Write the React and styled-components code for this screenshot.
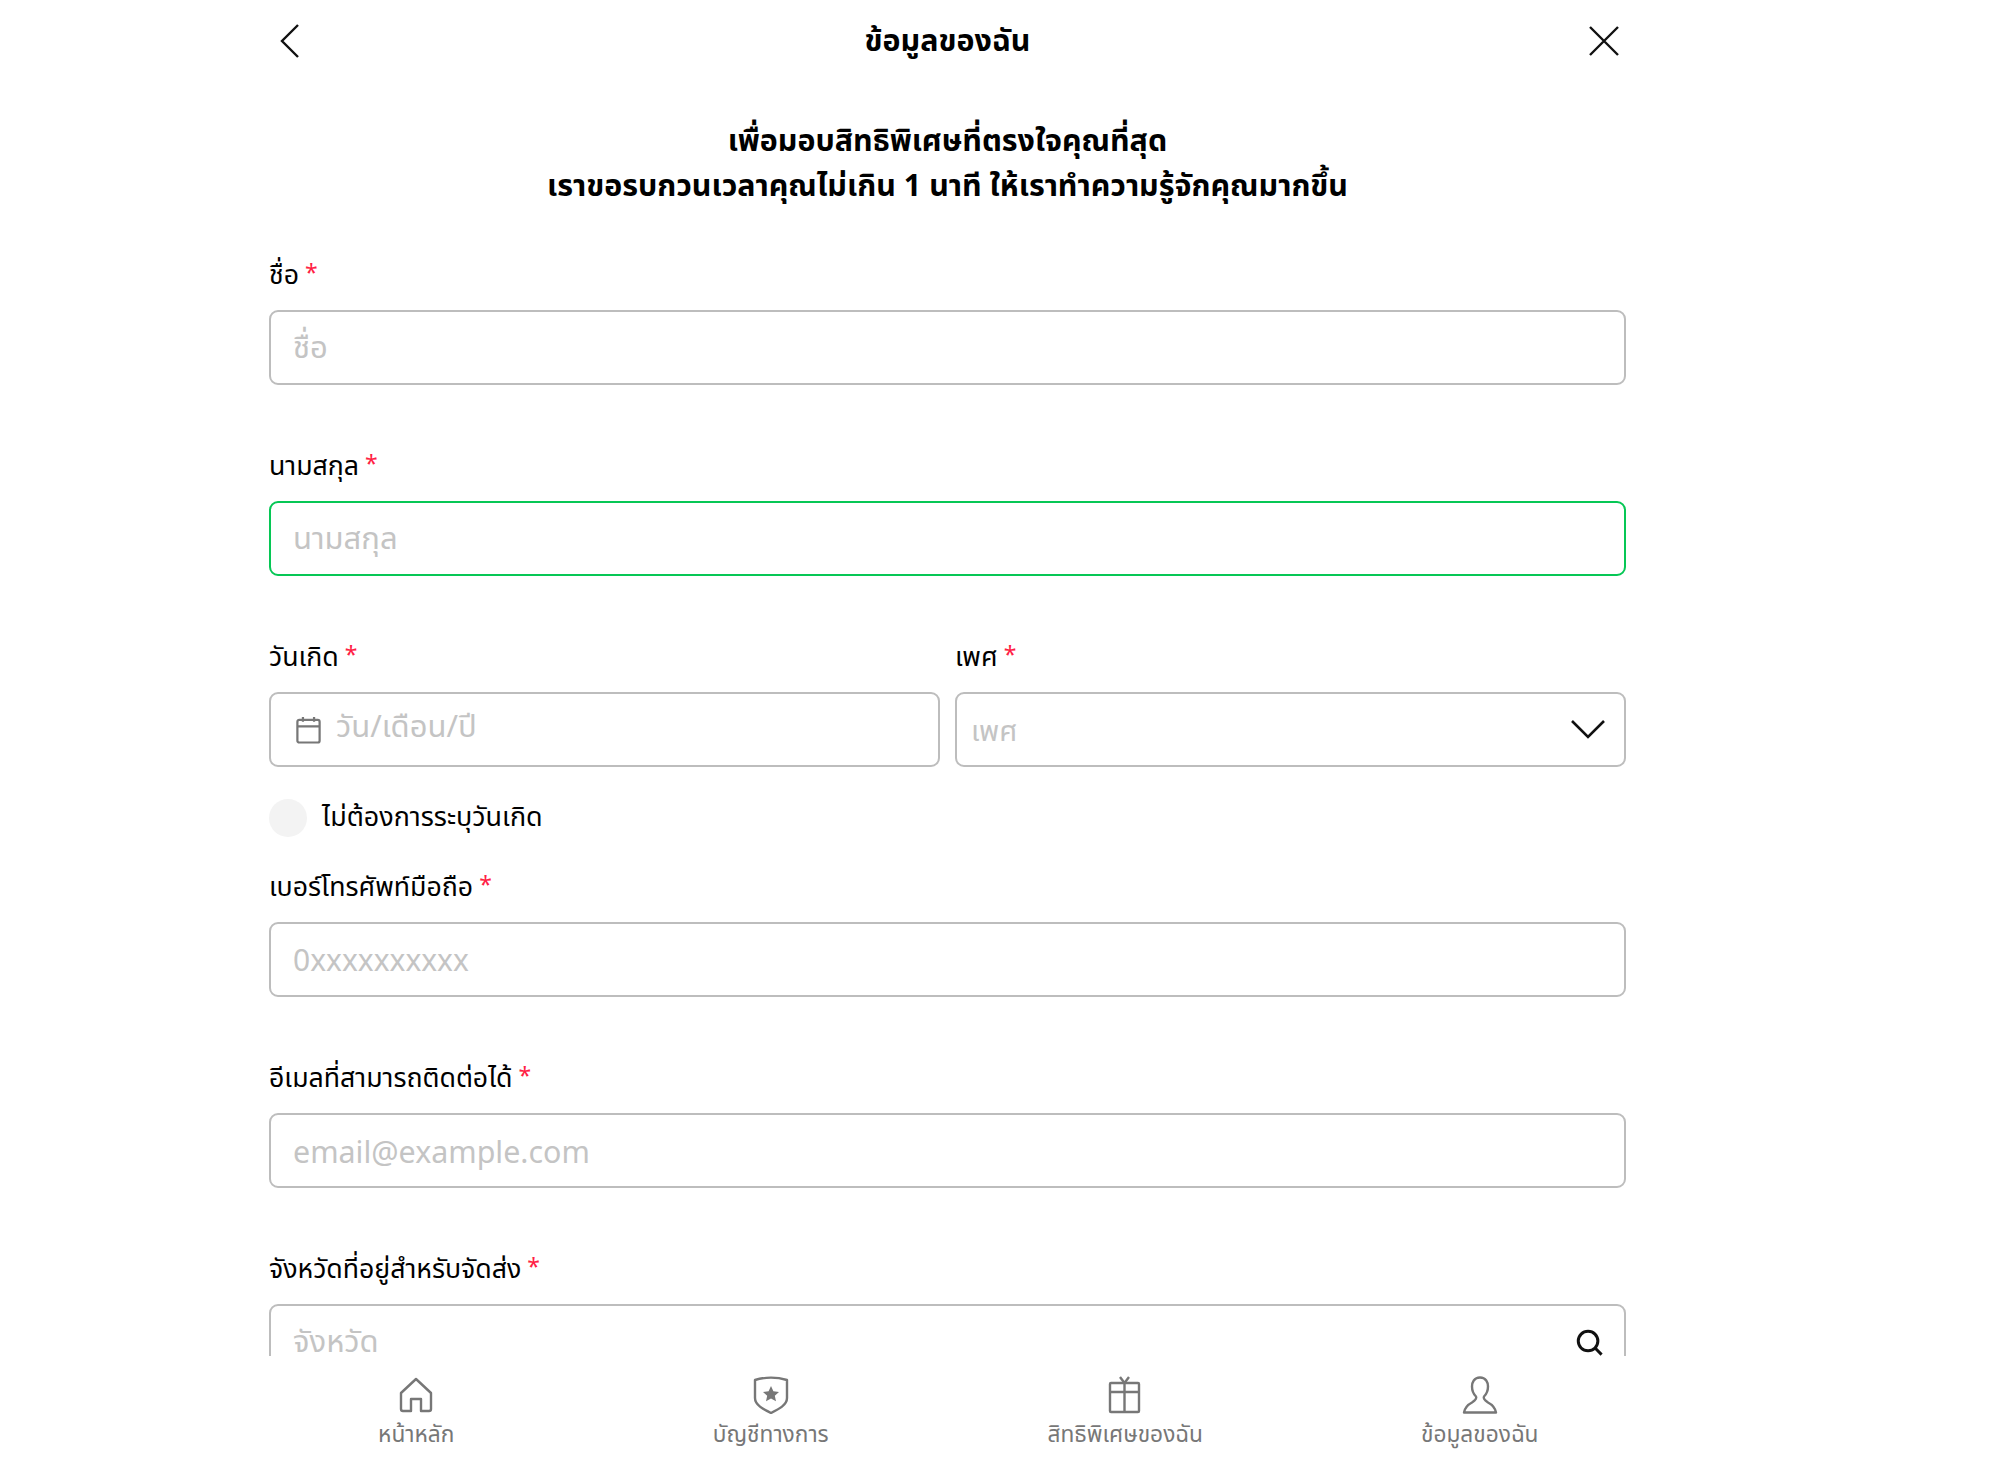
import React from "react";
import styled, { createGlobalStyle } from "styled-components";

const Global = createGlobalStyle`
  html, body { margin: 0; padding: 0; background: #fff; height: 100%; overflow: hidden; }
  #root { height: 100%; }
  * { box-sizing: border-box; }
`;
const FONT = `"Noto Sans Thai", "Noto Sans Thai Looped", "Noto Sans", "Liberation Sans", sans-serif`;

const Page = styled.div`
  height: 1459px; display: flex; flex-direction: column; font-family: ${FONT}; color: #000; background: #fff;
`;
const Scroll = styled.main`
  flex: 0 0 1356px; height: 1356px; overflow: hidden; width: 1357px; margin-left: 269px;
`;
const Header = styled.header`
  height: 82px; display: flex; align-items: center; justify-content: space-between;
`;
const HeaderBtn = styled.button`
  width: 44px; height: 44px; padding: 0 ${p => p.$pr ?? 0}px 0 0; border: 0; background: none; display: flex; align-items: center; justify-content: center;
`;
const Title = styled.h1`
  margin: 0; padding-top: 2px; font-size: 30.4px; font-weight: 700; line-height: 40px;
`;
const Heading = styled.h2`
  margin: 38px 0 0; font-size: 30.4px; font-weight: 700; line-height: 45px; text-align: center; height: 136px;
`;
const Field = styled.div`
  display: flex; flex-direction: column; flex: 1; min-width: 0; margin-bottom: ${p => p.$mb ?? 62}px;
`;
const Label = styled.label`
  font-size: 26.7px; line-height: 40px; height: 54px; display: flex; gap: 6px; align-items: flex-start;
`;
const Star = styled.span`color: #ff1f46; font-size: 23px; line-height: 36px;`;
const Box = styled.div`
  height: 75px; border: 2px solid ${p => p.$active ? "#06c755" : "#bdbdbd"}; border-radius: 9px; display: flex; align-items: center;
  padding: 0 ${p => p.$pr ?? 21}px 0 ${p => p.$pl ?? 22}px; gap: ${p => p.$gap ?? 13}px; background: #fff; justify-content: space-between;
`;
const Placeholder = styled.span`
  color: #c4c4c4; font-size: ${p => p.$size ?? 31}px; line-height: 40px; flex: 1; margin-top: ${p => p.$mt ?? 3}px;
`;
const Row = styled.div`display: flex; gap: 15px;`;
const ToggleRow = styled.div`
  display: flex; align-items: center; gap: 15px; height: 40px; margin: 0 0 30px;
`;
const Toggle = styled.span`width: 38px; height: 38px; border-radius: 50%; background: #f3f3f3;`;
const ToggleText = styled.span`font-size: 26.9px; line-height: 40px;`;
const ChevronSlot = styled.span`display: flex; margin-bottom: 2px;`;
const Nav = styled.nav`
  flex: 1; width: 1418px; margin-left: 239px; display: grid; grid-template-columns: repeat(4, 1fr); background: #fff;
`;
const NavItem = styled.div`
  display: flex; flex-direction: column; align-items: center; padding-top: 20px; color: #777; gap: 4px;
`;
const NavText = styled.span`font-size: 22.7px; line-height: 34px; color: #777;`;

const Back = () => (
  <svg width="20" height="34" viewBox="0 0 20 34" fill="none" stroke="#111" strokeWidth="2.4"><path d="M18 1 2 17l16 16" /></svg>
);
const Close = () => (
  <svg width="32" height="32" viewBox="0 0 32 32" fill="none" stroke="#111" strokeWidth="2.4"><path d="M2 2l28 28M30 2 2 30" /></svg>
);
const Chevron = () => (
  <svg width="36" height="20" viewBox="0 0 36 20" fill="none" stroke="#111" strokeWidth="2.6"><path d="M2 2l16 16L34 2" /></svg>
);
const Calendar = () => (
  <svg width="25" height="28" viewBox="0 0 27 30" fill="none" stroke="#777" strokeWidth="2.4">
    <rect x="1.5" y="4" width="24" height="24.5" rx="2" />
    <path d="M1.5 11h24M7.5 1v5M19.5 1v5" />
  </svg>
);
const Search = () => (
  <svg width="28" height="28" viewBox="0 0 30 30" fill="none" stroke="#111" strokeWidth="3.2"><circle cx="14" cy="14" r="10.500" /><path d="M21.500 21.500l7 7" /></svg>
);
const Home = () => (
  <svg width="36" height="38" viewBox="0 -1 36 38" fill="none" stroke="#777" strokeWidth="2.4" strokeLinejoin="round">
    <path d="M18 2 3 16v16a2 2 0 0 0 2 2h8V22h10v12h8a2 2 0 0 0 2-2V16z" />
  </svg>
);
const Shield = () => (
  <svg width="36" height="38" viewBox="0 0 36 38" fill="none" stroke="#777" strokeWidth="2.4" strokeLinejoin="round">
    <path d="M2 4c10-3 22-3 32 0v18c0 7-8 11-16 15C10 33 2 29 2 22z" />
    <path fill="#777" stroke="none" d="m18 10 2.400 5.300 5.600.6-4.200 3.800 1.200 5.600-5-2.900-5 2.900 1.200-5.600L10 15.900l5.600-.6z" />
  </svg>
);
const Gift = () => (
  <svg width="34" height="38" viewBox="0 0 34 38" fill="none" stroke="#777" strokeWidth="2.4" strokeLinejoin="round">
    <rect x="2" y="7" width="29" height="29" rx="1" />
    <path d="M2 16h29M16.500 7v29M12 1l4.500 6L21 1" />
  </svg>
);
const User = () => (
  <svg width="36" height="38" viewBox="0 0 36 38" fill="none" stroke="#777" strokeWidth="2.4" strokeLinejoin="round">
    <path d="M18 1.500c-6 0-8 5-8 9 0 4 2 8 4 10 1 2-1 4-4 6-4 2-7 5-8 10h32c-1-5-4-8-8-10-3-2-5-4-4-6 2-2 4-6 4-10 0-4-2-9-8-9z" />
  </svg>
);

const TextField = ({ label, placeholder, active, icon, size, mt }) => (
  <Field>
    <Label>{label}<Star>*</Star></Label>
    <Box $active={active}>
      <Placeholder $size={size} $mt={mt}>{placeholder}</Placeholder>
      {icon}
    </Box>
  </Field>
);

const tabs = [
  [Home, "หน้าหลัก"],
  [Shield, "บัญชีทางการ"],
  [Gift, "สิทธิพิเศษของฉัน"],
  [User, "ข้อมูลของฉัน"],
];

export default function App() {
  return (
    <Page>
      <Global />
      <Scroll>
        <Header>
          <HeaderBtn $pr={2}><Back /></HeaderBtn>
          <Title>ข้อมูลของฉัน</Title>
          <HeaderBtn><Close /></HeaderBtn>
        </Header>
        <Heading>
          เพื่อมอบสิทธิพิเศษที่ตรงใจคุณที่สุด<br />
          เราขอรบกวนเวลาคุณไม่เกิน 1 นาที ให้เราทำความรู้จักคุณมากขึ้น
        </Heading>
        <TextField label="ชื่อ" placeholder="ชื่อ" />
        <TextField label="นามสกุล" placeholder="นามสกุล" active />
        <Row>
          <Field $mb={31}>
            <Label>วันเกิด<Star>*</Star></Label>
            <Box $pl={25} $gap={15}>
              <Calendar />
              <Placeholder $mt={-3}>วัน/เดือน/ปี</Placeholder>
            </Box>
          </Field>
          <Field $mb={31}>
            <Label>เพศ<Star>*</Star></Label>
            <Box $pl={14} $pr={18}>
              <Placeholder $size={29} $mt={4}>เพศ</Placeholder>
              <ChevronSlot><Chevron /></ChevronSlot>
            </Box>
          </Field>
        </Row>
        <ToggleRow>
          <Toggle />
          <ToggleText>ไม่ต้องการระบุวันเกิด</ToggleText>
        </ToggleRow>
        <TextField label="เบอร์โทรศัพท์มือถือ" placeholder="0xxxxxxxxxx" size={30} mt={5} />
        <TextField label="อีเมลที่สามารถติดต่อได้" placeholder="email@example.com" size={30.4} mt={6} />
        <TextField label="จังหวัดที่อยู่สำหรับจัดส่ง" placeholder="จังหวัด" icon={<Search />} />
      </Scroll>
      <Nav>
        {tabs.map(([Icon, text]) => (
          <NavItem key={text}>
            <Icon />
            <NavText>{text}</NavText>
          </NavItem>
        ))}
      </Nav>
    </Page>
  );
}
